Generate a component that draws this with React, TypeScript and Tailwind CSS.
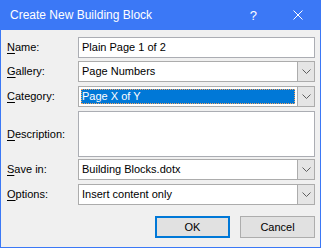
import React from 'react';

const font = { fontFamily: '"Liberation Sans", Arial, sans-serif' };

function Chevron() {
  return (
    <svg width="9" height="5" viewBox="0 0 9 5" className="block">
      <path d="M0.5 0.5 L4.5 4.5 L8.5 0.5" fill="none" stroke="#5f5f5f" strokeWidth="1" />
    </svg>
  );
}

function Label({ k, rest }: { k: string; rest: string }) {
  return (
    <span className="text-black">
      <span className="underline underline-offset-2">{k}</span>
      {rest}
    </span>
  );
}

function TextBox({ value }: { value: string }) {
  return (
    <div className="h-[21px] flex-1 border border-[#abadb3] bg-white flex items-center pl-[3px] text-black">
      {value}
    </div>
  );
}

function Combo({ value, selected }: { value: string; selected?: boolean }) {
  return (
    <div className="h-[21px] flex-1 flex border border-[#acacac] bg-white">
      <div className="flex-1 flex items-stretch p-[2px]">
        {selected ? (
          <div className="flex-1 bg-[#0078d7] text-white flex items-center pl-[1px] outline outline-1 outline-dotted outline-[#f4a460] -outline-offset-1">
            {value}
          </div>
        ) : (
          <div className="flex-1 flex items-center pl-[1px] text-black">{value}</div>
        )}
      </div>
      <div className="w-[17px] bg-[#e5e5e5] border-l border-[#acacac] flex items-center justify-center">
        <Chevron />
      </div>
    </div>
  );
}

export default function App() {
  return (
    <div
      className="w-[321px] h-[248px] bg-[#f0f0f0] border border-t-0 border-[#3b78f6] flex flex-col overflow-hidden text-[11px] leading-[13px]"
      style={font}
    >
      <div className="h-[30px] shrink-0 bg-[#3b78f6] flex items-center text-white">
        <span className="pl-[9px] text-[12px] leading-[14px] flex-1">Create New Building Block</span>
        <span className="text-[13px] leading-[15px] mr-[36px]">?</span>
        <svg width="10" height="10" viewBox="0 0 10 10" className="mr-[17px]">
          <path d="M0.5 0.5 L9.5 9.5 M9.5 0.5 L0.5 9.5" stroke="white" strokeWidth="1" />
        </svg>
      </div>

      <div className="flex flex-col pl-[6px] pr-[5px] pt-[7px]">
        <div className="flex items-center">
          <div className="w-[71px]"><Label k="N" rest="ame:" /></div>
          <TextBox value="Plain Page 1 of 2" />
        </div>
        <div className="flex items-center mt-[3px]">
          <div className="w-[71px]"><Label k="G" rest="allery:" /></div>
          <Combo value="Page Numbers" />
        </div>
        <div className="flex items-center mt-[4px]">
          <div className="w-[71px]"><Label k="C" rest="ategory:" /></div>
          <Combo value="Page X of Y" selected />
        </div>
        <div className="flex items-center mt-[4px]">
          <div className="w-[71px]"><Label k="D" rest="escription:" /></div>
          <div className="h-[46px] flex-1 border border-[#abadb3] bg-white" />
        </div>
        <div className="flex items-center mt-[2px]">
          <div className="w-[71px]"><Label k="S" rest="ave in:" /></div>
          <Combo value="Building Blocks.dotx" />
        </div>
        <div className="flex items-center mt-[4px]">
          <div className="w-[71px]"><Label k="O" rest="ptions:" /></div>
          <Combo value="Insert content only" />
        </div>

        <div className="flex justify-end gap-[10px] mt-[11px]">
          <button className="w-[75px] h-[22px] bg-[#e1e1e1] border-2 border-[#0078d7] text-black">OK</button>
          <button className="w-[75px] h-[22px] bg-[#e1e1e1] border border-[#adadad] text-black">Cancel</button>
        </div>
      </div>
    </div>
  );
}
